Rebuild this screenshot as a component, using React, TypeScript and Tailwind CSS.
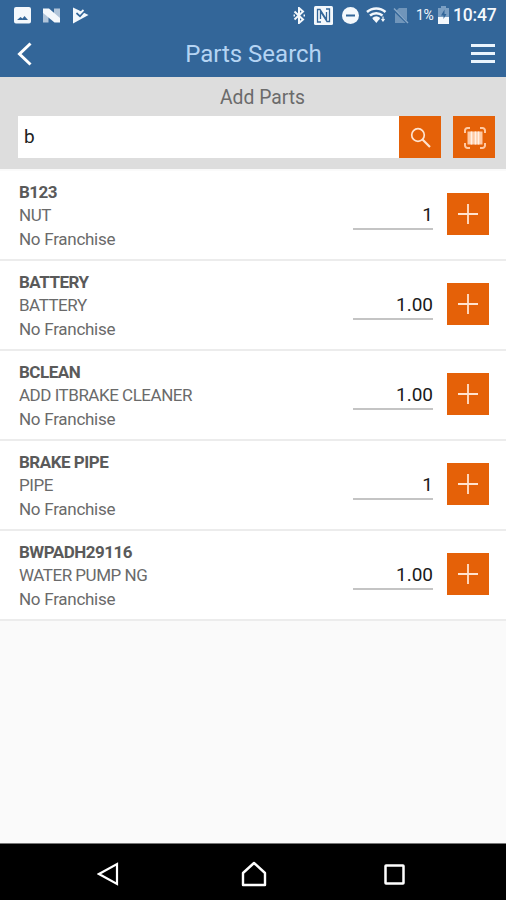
import { useState } from "react";

const parts = [
  { code: "B123", description: "NUT", franchise: "No Franchise", qty: "1" },
  { code: "BATTERY", description: "BATTERY", franchise: "No Franchise", qty: "1.00" },
  { code: "BCLEAN", description: "ADD ITBRAKE CLEANER", franchise: "No Franchise", qty: "1.00" },
  { code: "BRAKE PIPE", description: "PIPE", franchise: "No Franchise", qty: "1" },
  { code: "BWPADH29116", description: "WATER PUMP NG", franchise: "No Franchise", qty: "1.00" },
];

function StatusBar() {
  return (
    <div className="flex h-[30px] items-center pl-[14px] pr-[10px] text-[#f4f8fc]">
      <svg width="17" height="17" viewBox="0 0 17 17" fill="currentColor">
        <path
          fillRule="evenodd"
          d="M2 0h13a2 2 0 0 1 2 2v12.500a2 2 0 0 1-2 2H2a2 2 0 0 1-2-2V2a2 2 0 0 1 2-2Zm1 13h11l-3.500-4-2 2.500-2-1.500Z"
        />
      </svg>
      <svg className="ml-[11px]" width="19" height="15" viewBox="0 0 19 15" fill="currentColor">
        <path opacity=".65" d="M1 4.500 6.500 9v5.500H1ZM12 .500h6V11l-6-5Z" />
        <path d="M1 .500h6L18 10v4.500h-5.500L1 5Z" />
      </svg>
      <svg className="ml-[11px]" width="17" height="17" viewBox="0 0 17 17">
        <path d="M1 .500 16.500 8 1 16.500Z" fill="currentColor" />
        <path d="m4.500 6 3.500 3.200L13.500 3" fill="none" stroke="#336699" strokeWidth="1.800" />
        <path d="m5 3.500 3 3 3.500-3.500" fill="none" stroke="currentColor" strokeWidth="1.800" />
      </svg>

      <svg className="ml-auto" width="12" height="17" viewBox="0 0 12 17" fill="none" stroke="currentColor" strokeWidth="2">
        <path d="m1.500 4.500 8.500 8L6 16V1l4 3.500-8.500 8" />
        <path d="M.500 8.500H2M10.500 8.500H12" />
      </svg>
      <svg className="ml-[9px]" width="19" height="19" viewBox="0 0 19 19">
        <rect width="19" height="19" rx="1.500" fill="currentColor" />
        <path
          d="M7 16H3.500V3.500H6l6.500 10V6M12 3h3.500v12.500H13L6.500 5.500V13"
          fill="none"
          stroke="#336699"
          strokeWidth="1.300"
        />
      </svg>
      <svg className="ml-[9px]" width="17" height="17" viewBox="0 0 17 17">
        <circle cx="8.500" cy="8.500" r="8.500" fill="currentColor" />
        <path d="M4 8.500h9" stroke="#336699" strokeWidth="2" />
      </svg>
      <svg className="ml-[7px]" width="21" height="16" viewBox="0 0 21 16" fill="none" stroke="currentColor" strokeWidth="2.500">
        <path d="M1 5a14 14 0 0 1 18.500 0M4 8.500a9.500 9.500 0 0 1 12.500 0M7 12a5 5 0 0 1 6.500 0" />
        <path d="m7 12 3.300 4 3.300-4Z" fill="currentColor" stroke="none" />
        <path d="M17 9.500v5M15.500 12l1.500 2 1.500-2" strokeWidth="1.200" />
      </svg>
      <svg className="ml-[6px]" width="16" height="17" viewBox="0 0 16 17">
        <path d="M6 1h8v15H2V5Z" fill="#7095ba" />
        <path d="m0 2 15 14.500" stroke="#336699" strokeWidth="2.500" />
        <path d="m1 1.500 14 14.500" stroke="#88a8c8" strokeWidth="1.400" />
      </svg>
      <span className="ml-[7px] w-[19px] text-[14px] tracking-[-0.400px]">1%</span>
      <svg className="ml-[2px]" width="13" height="18" viewBox="0 0 13 18">
        <path d="M4 0h5v2h3v16H1V2h3Z" fill="#7b9fc3" />
        <path d="M1 11h11v7H1Z" fill="currentColor" />
        <path d="M7.500 3.500 4 9.500h2.500V13L9.500 8h-2Z" fill="#336699" />
      </svg>
      <span className="ml-[3px] w-[43px] whitespace-nowrap text-[17.500px] font-medium tracking-[-0.200px]">10:47</span>
    </div>
  );
}

function Header() {
  return (
    <header className="flex h-[47px] items-center justify-between pl-[17px] pr-[11px]">
      <button className="w-[19px]">
        <svg width="16" height="24" viewBox="0 0 16 24" fill="none" stroke="#fff" strokeWidth="3">
          <path d="M13.500 1.500 2.500 12l11 10.500" />
        </svg>
      </button>
      <h1 className="text-[24px] text-[#b5d4f3]">Parts Search</h1>
      <button className="flex w-[24px] flex-col gap-[5px]">
        <span className="h-[3px] bg-[#eaf4fd]" />
        <span className="h-[3px] bg-[#eaf4fd]" />
        <span className="h-[3px] bg-[#eaf4fd]" />
      </button>
    </header>
  );
}

function SearchPanel() {
  const [query, setQuery] = useState("b");

  return (
    <div className="h-[92px] bg-[#dddddd] pl-[18px] pr-[11px]">
      <h2 className="h-[39px] pl-[12px] text-center text-[19.300px] leading-[41px] text-[#6b6b6b]">Add Parts</h2>
      <div className="flex h-[42px]">
        <input
          className="w-[381px] bg-white px-[6px] text-[19px] text-[#222] outline-none"
          value={query}
          onChange={(e) => setQuery(e.target.value)}
        />
        <button className="flex w-[42px] items-center justify-center bg-[#e56108] pl-px pt-px">
          <svg width="22" height="22" viewBox="0 0 22 22" fill="none" stroke="#ffe3cf">
            <circle cx="8" cy="8" r="6.300" strokeWidth="1.700" />
            <path d="m12.500 12.500 7.500 7.500" strokeWidth="2.200" />
          </svg>
        </button>
        <button className="ml-[12px] flex w-[42px] items-center justify-center bg-[#e56108] pl-px pt-px">
          <svg width="22" height="22" viewBox="0 0 22 22" fill="none" stroke="#ffc9a3">
            <path
              d="M1 6V3.500A2.500 2.500 0 0 1 3.500 1H6M16 1h2.500A2.500 2.500 0 0 1 21 3.500V6M21 16v2.500a2.500 2.500 0 0 1-2.500 2.500H16M6 21H3.500A2.500 2.500 0 0 1 1 18.500V16"
              strokeWidth="2"
            />
            <path d="M3.500 4.500h15v13h-15Z" fill="#ffc9a3" stroke="none" />
            <path d="M7.500 4.500v13M11.500 4.500v13M14.500 4.500v13" stroke="#fff1e6" strokeWidth="1.600" />
          </svg>
        </button>
      </div>
    </div>
  );
}

function PartRow({ part }: { part: (typeof parts)[number] }) {
  return (
    <li className="flex h-[90px] border-b-2 border-[#ececec] bg-white pl-[19px] pr-[17px]">
      <div className="flex-1 pt-[10px] text-[17px] leading-[23.300px] text-[#6a6a6a]">
        <p className="font-bold tracking-[-0.500px] text-[#5a5a5a]">{part.code}</p>
        <p className="tracking-[-0.480px]">{part.description}</p>
        <p className="tracking-[-0.270px]">{part.franchise}</p>
      </div>
      <input
        className="mt-[30px] h-[29px] w-[80px] border-b-2 border-[#c4c4c4] pb-px text-right text-[19px] text-[#1a1a1a] outline-none"
        defaultValue={part.qty}
      />
      <button className="ml-[14px] mt-[22px] flex size-[42px] items-center justify-center bg-[#e56108]">
        <svg width="20" height="20" viewBox="0 0 20 20" stroke="#ffe3cf" strokeWidth="1.800">
          <path d="M10 0v20M0 10h20" />
        </svg>
      </button>
    </li>
  );
}

function NavBar() {
  return (
    <nav className="flex h-[57px] items-center border-t border-[#777] bg-black pt-[4px]">
      <svg className="ml-[97px]" width="22" height="24" viewBox="0 0 22 24" fill="none" stroke="#fff" strokeWidth="2.200">
        <path d="M20 2v20L2 12Z" />
      </svg>
      <svg className="ml-[122px]" width="26" height="26" viewBox="0 0 26 26" fill="none" stroke="#fff" strokeWidth="2.400">
        <path d="M13 2 2 12v12h22V12Z" strokeLinejoin="round" />
      </svg>
      <svg className="ml-[117px]" width="21" height="21" viewBox="0 0 21 21" fill="none" stroke="#fff" strokeWidth="2.500">
        <rect x="1.500" y="1.500" width="18" height="18" rx=".500" />
      </svg>
    </nav>
  );
}

export default function App() {
  return (
    <div className="flex h-[900px] w-[506px] flex-col overflow-hidden bg-[#fafafa] font-['Roboto',sans-serif]">
      <div className="bg-[#336699]">
        <StatusBar />
        <Header />
      </div>
      <SearchPanel />
      <ul className="flex-1 pt-[2px]">
        {parts.map((part) => (
          <PartRow key={part.code} part={part} />
        ))}
      </ul>
      <NavBar />
    </div>
  );
}
